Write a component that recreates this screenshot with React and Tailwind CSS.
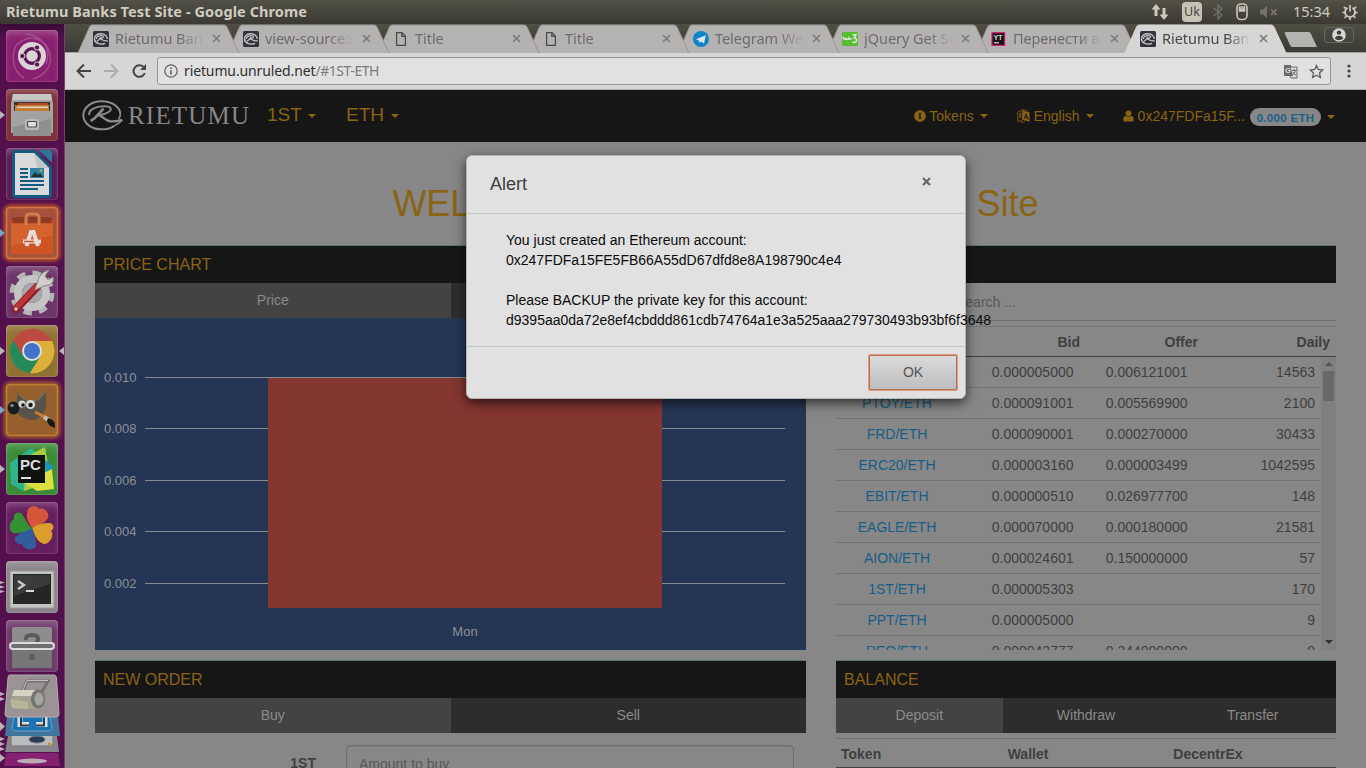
import React from "react";
import { FaInfoCircle } from "react-icons/fa";

const Caret = ({ className = "" }) => (
  <span className={`inline-block h-0 w-0 border-x-4 border-t-4 border-x-transparent border-t-[#8a6314] ${className}`} />
);

/* ---------- icons ---------- */

const Swirl = ({ className }) => (
  <svg className={className} viewBox="45 118 126 96" fill="none" stroke="#8b8b8b">
    <path d="M145 198C134 207 122 209 107 209C76 209 52 191 52 167C52 143 76 125 107 125C139 125 163 142 163 164" strokeWidth="6" />
    <path d="M163 164C163 170 161 174 158 178" strokeWidth="5" />
    <path d="M70 166C66 152 88 140 112 140C136 139 140 149 128 157C119 163 108 166 96 167" strokeWidth="6" />
    <path d="M113 147C100 156 96 172 74 184" strokeWidth="8" />
    <path d="M98 167C112 168 116 184 134 185C148 186 158 184 169 181" strokeWidth="7" />
    <path d="M169 181C162 190 154 194 144 199" strokeWidth="4" />
  </svg>
);

const SwirlFavicon = () => (
  <svg className="h-4 w-4 shrink-0" viewBox="0 0 16 16" fill="none" stroke="#c4c4c4">
    <rect width="16" height="16" rx="1.500" fill="#33333c" stroke="none" />
    <path d="M12 12.300C7 14.500 1.500 12 1.500 8C1.500 4 5 2.800 8 2.800C11.500 2.800 14.300 5 14.300 8" strokeWidth="1.400" />
    <path d="M3.500 8C3 5.500 6 4.600 8.500 4.600C11.500 4.600 11.500 6.800 7 7.800C9 8.200 9.500 10.500 14.800 9.800M8 6C6.500 8 5.500 9.500 3.800 10.300" strokeWidth="1.200" />
  </svg>
);

const FileFavicon = () => (
  <svg className="h-4 w-4 shrink-0" viewBox="0 0 16 16" fill="none" stroke="#4b4b4b" strokeWidth="1.300">
    <path d="M3.600 1.700H9L12.400 5.200V14.300H3.600Z" />
    <path d="M8.800 1.700V5.400H12.400" />
  </svg>
);

const TelegramFavicon = () => (
  <svg className="h-4 w-4 shrink-0" viewBox="0 0 16 16">
    <circle cx="8" cy="8" r="8" fill="#0d86c9" />
    <path d="M3 8.200L12.800 4.200L11 12.500L8 10.600L6.600 12L6 9.400Z" fill="#e2e6e8" />
  </svg>
);

const W3Favicon = () => (
  <svg className="h-4 w-4 shrink-0" viewBox="0 0 16 16" fill="none" stroke="#dfe5dc">
    <rect y="1" width="16" height="14" rx="1" fill="#55bd2d" stroke="none" />
    <path d="M1 5.500C1.200 9 3.500 9 4 7C4.500 9 6.500 9 7 7C7.500 8.300 8.500 8.500 10 7.500" strokeWidth="1.500" />
    <path d="M10.500 3.800H14L12 6.800C15.500 7 15 12 12 11.500C11.200 11.400 10.800 11 10.500 10.500" strokeWidth="1.500" />
  </svg>
);

const YouTrackFavicon = () => (
  <svg className="h-4 w-4 shrink-0" viewBox="0 0 16 16">
    <rect x="1" y="1.700" width="12.600" height="12.600" fill="#151515" stroke="#d2186c" strokeWidth="1.200" />
    <text x="2.800" y="8.600" fontFamily="Liberation Sans, sans-serif" fontWeight="bold" fontSize="6.800" fill="#dedede">YT</text>
    <rect x="3" y="11.200" width="5" height="1.200" fill="#dedede" />
  </svg>
);

const LanguageIcon = ({ className }) => (
  <svg className={className} viewBox="0 0 13 14" fill="none" stroke="#8a6314">
    <path d="M0.600 3L5.500 1.500V11L0.600 12.500Z" strokeWidth="1" opacity=".75" />
    <path d="M1.800 5L4.500 4.200M3 3.500V5C3 7 2.500 8.500 1.600 9.500M4.300 5C4 7 3 8 2 8.500M2.800 6.500L4.600 9" strokeWidth=".8" />
    <path d="M6 1.500L12.500 3.500V12.800L6 11Z" fill="#8a6314" stroke="none" />
    <path d="M7.400 9.500L9.200 4.800L11.200 10.600M8 8L10.400 8.700" stroke="#161616" strokeWidth="1" />
    <path d="M4 1L7 0.500L11 2M3 12.500L6 13.500L8 12.800" strokeWidth=".9" opacity=".75" />
  </svg>
);

const UserIcon = ({ className }) => (
  <svg className={className} viewBox="0 0 12 13" fill="#8a6314">
    <circle cx="6" cy="3.600" r="3.200" />
    <path d="M0.300 10.500C0.300 8 1.300 6.300 3 6.100Q6 8.600 9 6.100C10.700 6.300 11.700 8 11.700 10.500Q11.700 12.500 9.800 12.500H2.200Q0.300 12.500 0.300 10.500Z" />
  </svg>
);

/* ---------- system bar ---------- */

const SystemBar = () => (
  <header className="flex h-6 shrink-0 items-center justify-between bg-linear-to-b from-[#525146] to-[#3a3934] pl-1.5 pr-2 font-['Noto_Sans',sans-serif] text-[#d0ccc0]">
    <span className="-mt-0.5 whitespace-nowrap text-[14.500px] font-bold leading-6 tracking-[0.090px]">Rietumu Banks Test Site - Google Chrome</span>
    <div className="flex h-6 items-center">
      <svg className="mr-[13px] h-[18px] w-[18px]" viewBox="0 0 18 18" fill="#cbc7bb">
        <path d="M5 1L9.500 6.500H6.500V13H3.500V6.500H0.500Z" />
        <path d="M13 17L17.500 11.500H14.500V5H11.500V11.500H8.500Z" />
      </svg>
      <span className="mr-2.5 flex h-5 w-5 items-center justify-center rounded-sm bg-[#c6c3b7] text-[12.500px] leading-none text-[#45433c]">Uk</span>
      <svg className="mr-3 h-[18px] w-3" viewBox="0 0 12 18" fill="none" stroke="#74736b" strokeWidth="1.300">
        <path d="M1.500 5L10 12L6 16V2L10 6L1.500 13" />
      </svg>
      <svg className="mr-3 h-[18px] w-3" viewBox="0 0 12 18" fill="none" stroke="#cbc7bb">
        <rect x="1" y="1" width="10" height="15.500" rx="4" strokeWidth="1.600" />
        <path d="M3 3.500V8.500H9V3.500H7.500V6H6.600V3.500H5.400V6H4.500V3.500Z" fill="#cbc7bb" strokeWidth=".5" />
      </svg>
      <svg className="mr-[15px] h-[14px] w-[18px]" viewBox="0 0 18 14" fill="#74736b" stroke="#74736b">
        <path d="M0 4.500H3L7 1V13L3 9.500H0Z" stroke="none" />
        <path d="M11 4.500L16.500 10M16.500 4.500L11 10" strokeWidth="1.800" />
      </svg>
      <span className="mr-3 -mt-0.5 text-[14.500px] leading-6">15:34</span>
      <svg className="h-4 w-4" viewBox="0 0 16 16" fill="none" stroke="#cbc7bb">
        <path d="M5.600 3.700A5 5 0 1 0 10.400 3.700" strokeWidth="1.800" />
        <path d="M8 1V7.500M1.800 3L4 4.500M14.200 3L12 4.500M0.300 8.500H3M15.700 8.500H13M2.500 14L4.500 12M13.500 14L11.500 12M8 13.500V16" strokeWidth="1.700" />
      </svg>
    </div>
  </header>
);

/* ---------- launcher ---------- */

const Tile = ({ tone, children, marks = 0, focused, glow = "shadow-[inset_0_0_1px_1px_rgba(255,255,255,.12),inset_0_6px_10px_-4px_rgba(255,255,255,.3)]", markTone = "fill-[#b9b3b8]" }) => (
  <li className="relative mb-[7px] h-[52px] w-[52px] shrink-0">
    <div className={`h-[52px] w-[52px] overflow-hidden rounded-[4px] ${glow} ${tone}`}>
      <svg className="h-[52px] w-[52px]" viewBox="0 0 52 52">{children}</svg>
    </div>
    {marks === 1 && (
      <svg className="absolute top-[21px] -left-1.5 h-[10px] w-[5px]" viewBox="0 0 5 10"><path d="M0 1L5 5L0 9Z" className={markTone} /></svg>
    )}
    {marks === 3 && (
      <svg className="absolute top-[20px] -left-1.5 h-[12px] w-[5px]" viewBox="0 0 5 12" fill="#b9b3b8"><path d="M0 0L5 1.500L0 3ZM0 4.500L5 6L0 7.500ZM0 9L5 10.500L0 12Z" /></svg>
    )}
    {focused && (
      <svg className="absolute top-[21px] left-[53px] h-[10px] w-[5px]" viewBox="0 0 5 10"><path d="M5 1L0 5L5 9Z" fill="#b9b3b8" /></svg>
    )}
  </li>
);

const Launcher = () => (
  <nav className="h-full w-[65px] shrink-0 overflow-hidden border-r border-[#73426f] bg-linear-to-b from-[#3b0b38] via-[#540f4d] via-2% to-[#540f4d] pl-1.5 pt-1.5">
    <ul className="flex flex-col">
      <Tile tone="bg-[#89206f]">
        <g fill="none" stroke="#b069a3" strokeWidth="1.500" opacity=".6">
          <path d="M9 17C5 30 8 42 18 48M9 17C22 2 42 8 44 25M44 25C47 38 36 46 27 49M20 4C36 6 46 18 40 34" />
        </g>
        <circle cx="26" cy="26" r="14" fill="#d9d4d8" />
        <circle cx="26" cy="26" r="7.400" fill="none" stroke="#5c1450" strokeWidth="3.200" />
        <g fill="#5c1450" stroke="#d9d4d8" strokeWidth="1">
          <circle cx="16.300" cy="26" r="2.600" /><circle cx="31" cy="17.500" r="2.600" /><circle cx="31" cy="34.500" r="2.600" />
        </g>
      </Tile>
      <Tile tone="bg-[#7c3038]" marks={1}>
        <path d="M7 5H45L47 14V44H5V14Z" fill="#a4a4a2" />
        <path d="M7 5H45L46 11H6Z" fill="#c6c6c4" />
        <rect x="8" y="13" width="36" height="12" fill="#3c3330" />
        <rect x="12" y="14" width="30" height="3" fill="#b4492a" />
        <path d="M9 16H43V25H9Z" fill="#c67b32" />
        <path d="M11 17.500H42V19H11Z" fill="#e1d5bf" />
        <path d="M7 22H45V47H7Z" fill="#8f8f8f" />
        <path d="M7 22H45V30L7 38Z" fill="#a2a2a1" />
        <rect x="19" y="30" width="14" height="11" rx="2" fill="#b9b9b8" />
        <rect x="21.500" y="32.500" width="9" height="5.500" rx="1" fill="#dedede" stroke="#4b4b4b" strokeWidth="1.200" />
      </Tile>
      <Tile tone="bg-[#571d54]">
        <path d="M8 2H29L46 19V47Q46 50 43 50H9Q6 50 6 47V4Z" fill="#165980" />
        <path d="M33 2H43Q46 2 46 5V15Z" fill="#2b77a0" />
        <path d="M9 5H28L43 20V47H9Z" fill="#d8d9da" />
        <path d="M28 5L43 20H31Z" fill="#bfc5c9" />
        <path d="M14 21H22M14 25H22M14 29H22M14 33H38M14 37H38M14 41H32" stroke="#165980" strokeWidth="2" />
        <rect x="24" y="20" width="14" height="10" fill="#2b82aa" />
        <path d="M25 29L29 24L32 27L34 25L37 29Z" fill="#25322c" /><circle cx="35" cy="22.500" r="1.500" fill="#b5a043" />
      </Tile>
      <Tile tone="bg-[#a5523a]" glow="shadow-[inset_0_0_2px_1px_#e78342,0_0_4px_2px_#c8602f]" marks={1} markTone="fill-[#73a8c4]">
        <path d="M5 12H47V47H5Z" fill="#cd5425" />
        <path d="M5 12L10 10H42L47 12L45 16H7Z" fill="#8e3c25" />
        <path d="M5 17H47V28L5 39Z" fill="#d86a35" opacity=".7" />
        <path d="M20 18V11Q20 7 24 7H29Q33 7 33 11V18" fill="none" stroke="#d57a51" strokeWidth="3" />
        <path d="M20.500 39L25 25H27.500L32 39" fill="none" stroke="#e6ddd8" strokeWidth="4" />
        <path d="M17 34.500H35" stroke="#e6ddd8" strokeWidth="4" /><path d="M18 34.500H28" stroke="#cd5425" strokeWidth="1.700" />
      </Tile>
      <Tile tone="bg-[#6c3469]">
        <circle cx="26" cy="27" r="19" fill="none" stroke="#b5b4b5" strokeWidth="7" strokeDasharray="8 6.900" />
        <circle cx="26" cy="27" r="14" fill="none" stroke="#c5c4c5" strokeWidth="8" />
        <circle cx="26" cy="27" r="10" fill="#a9a7aa" />
        <path d="M10 43L31 21" stroke="#8f1d22" strokeWidth="8" strokeLinecap="round" />
        <path d="M10 42L30 21" stroke="#b8373a" strokeWidth="5" strokeLinecap="round" />
        <path d="M29 24L33 11Q37 5 43 4L39 10L42 14L47 11Q49 19 38 20Z" fill="#d1cecb" stroke="#8d8887" />
        <circle cx="10" cy="43" r="1.600" fill="#dedede" />
      </Tile>
      <Tile tone="bg-[#8f7134]" marks={1} focused>
        <circle cx="26" cy="26" r="22" fill="#c3a02f" />
        <path d="M26 26L7 15A22 22 0 0 0 24 48L34 32Z" fill="#238a58" />
        <path d="M7 15L17 31L26 16H46A22 22 0 0 0 7 15Z" fill="#bb4a40" />
        <path d="M26 16H46A22 22 0 0 1 24 48L35 31Z" fill="#ddb039" />
        <circle cx="26" cy="26" r="10" fill="#e0e0dd" /><circle cx="26" cy="26" r="8" fill="#4174c8" />
      </Tile>
      <Tile tone="bg-[#96602c]" glow="shadow-[inset_0_0_2px_1px_#d18b37,0_0_4px_2px_#b06a2c]" marks={1} markTone="fill-[#73a8c4]">
        <path d="M12 8Q18 18 27 17Q35 16 39 6Q43 25 35 32Q27 40 15 32Q8 28 12 8Z" fill="#57524b" />
        <path d="M12 9Q18 18 27 17Q35 16 39 7" fill="none" stroke="#7d766b" />
        <ellipse cx="7.500" cy="24" rx="6" ry="6.500" fill="#171c20" /><ellipse cx="6" cy="21.500" rx="2" ry="1.600" fill="#77848b" />
        <circle cx="16" cy="20" r="3.600" fill="#d8d8d2" /><circle cx="24.500" cy="20.500" r="4.600" fill="#d8d8d2" />
        <circle cx="17" cy="21" r="1.800" fill="#191919" /><circle cx="24.500" cy="21" r="2.200" fill="#191919" />
        <path d="M29 28L41 34" stroke="#ce7c2f" strokeWidth="3" /><path d="M38 33L43 36" stroke="#bdc0bd" strokeWidth="4" />
        <path d="M42 34Q50 36 49 44Q42 42 41 37Z" fill="#171717" />
      </Tile>
      <Tile tone="bg-[#3c8b39]" marks={1}>
        <path d="M4 20L25 5L38 17L25 45L17 48L5 41Z" fill="#30b28d" />
        <path d="M20 14L39 4L45 39L18 48Z" fill="#a6cc3f" />
        <path d="M38 16L48 24L40 31Z" fill="#1796b6" />
        <path d="M18 40L46 26L48 46L31 48Z" fill="#dce043" />
        <rect x="12" y="12" width="27" height="28" fill="#10120f" />
        <text x="14" y="27" fontFamily="Liberation Sans, sans-serif" fontWeight="bold" fontSize="15" fill="#dedede">PC</text>
        <rect x="15" y="34" width="10" height="2" fill="#dedede" />
      </Tile>
      <Tile tone="bg-[#651e5e]">
        <path d="M26 26C20 17 20 13 22 7C26 2 32 4 33 7C38 5 44 11 42 16C38 22 33 23 26 26Z" fill="#d4553a" />
        <path d="M26 26C30 23 36 21 44 21C49 23 48 27 45 29C49 33 44 42 38 42C31 40 28 32 26 26Z" fill="#d99e2c" />
        <path d="M26 26C19 26 15 31 9 35C8 40 12 43 16 42C19 49 28 49 30 44C30 37 28 31 26 26Z" fill="#315d9c" />
        <path d="M26 26C21 23 20 17 15 11C10 9 7 13 8 17C2 20 3 29 7 31C14 32 20 29 26 26Z" fill="#339334" />
      </Tile>
      <Tile tone="bg-[#8b828a]" marks={3}>
        <rect x="4" y="10" width="44" height="37" fill="#c3c4c1" stroke="#999b98" />
        <rect x="7" y="13" width="38" height="30" fill="#232625" />
        <path d="M8 14H44V23L8 35Z" fill="#393c3b" />
        <path d="M12 20L18 24L12 28" fill="none" stroke="#c9cbc8" strokeWidth="2.300" /><path d="M20 30H28" stroke="#d9dad8" strokeWidth="2" />
      </Tile>
      <Tile tone="bg-[#6f3a6b]">
        <rect x="6" y="7" width="40" height="41" rx="2" fill="#8e8d8e" />
        <path d="M6 26H46V46Q46 48 44 48H8Q6 48 6 46Z" fill="#777677" />
        <path d="M20 20Q19 15 26 15Q33 15 32 20L30 24" fill="none" stroke="#59585a" strokeWidth="4" />
        <circle cx="26" cy="37" r="3" fill="#5d5c5e" />
        <rect x="4" y="23" width="44" height="6" rx="3" fill="#706f70" stroke="#dedbdd" strokeWidth="2" />
      </Tile>
    </ul>
    <svg className="-mt-[5px] -ml-1.5 h-[96px] w-[64px]" viewBox="0 0 64 96">
      <path d="M6 79H58L60 92H4Z" fill="#842171" /><ellipse cx="32" cy="87" rx="15" ry="2.500" fill="#b9aab6" />
      <path d="M8 62H57L59 78H5Z" fill="#87848a" /><rect x="11" y="58" width="42" height="14" rx="2" fill="#b9bbbd" stroke="#767675" />
      <ellipse cx="37" cy="65.500" rx="8" ry="3.500" fill="#283c53" stroke="#777d84" /><rect x="48" y="69" width="3" height="2" fill="#d08b22" />
      <path d="M7 41H58L60 62H5Z" fill="#41759d" /><path d="M14 41H50L52 55Q51 57 48 57H16Q13 57 12 55Z" fill="#1a74b6" stroke="#76a4c4" />
      <path d="M20 42V50.500H29M45 42V50.500H36" fill="none" stroke="#d9dedf" strokeWidth="5" /><path d="M21 41V51.500H29M44 41V51.500H36" fill="none" stroke="#2d3a44" strokeWidth="2" />
      <path d="M10 1H54Q56 1 56.500 4L59 40Q59 43 56 43H8Q5 43 5 40L8 4Q8 1 10 1Z" fill="#9a9295" stroke="#b4adb0" />
      <path d="M23 17L27 7H48L39 23" fill="none" stroke="#72716d" strokeWidth="3" /><path d="M23 16L27 6.500H48" fill="none" stroke="#c0c0bb" />
      <path d="M14 16H38V35H14Q8 26 14 16Z" fill="#a1a290" /><path d="M14 16H38V22H12Z" fill="#d4d3c4" /><path d="M10 25L28 28V35L12 34Z" fill="#b6b597" />
      <ellipse cx="38" cy="25" rx="7" ry="9.500" fill="#71736f" /><ellipse cx="39" cy="25" rx="4.500" ry="6.500" fill="#a3a4a0" />
      <g fill="#b9b3b8"><path d="M0 18L5 20L0 22ZM0 23L5 25L0 27ZM0 48L5 52.500L0 57ZM0 63L5 65L0 67ZM0 68L5 70L0 72ZM0 73L5 75L0 77ZM0 80L5 84L0 88Z" /></g>
    </svg>
  </nav>
);

/* ---------- browser chrome ---------- */

const tabs = [
  { icon: <SwirlFavicon />, title: "Rietumu Banks", z: "z-[8] w-[150px]" },
  { icon: <SwirlFavicon />, title: "view-source:l", z: "z-[7] w-[150px]" },
  { icon: <FileFavicon />, title: "Title", z: "z-[6] w-[150px]" },
  { icon: <FileFavicon />, title: "Title", z: "z-[5] w-[150px]" },
  { icon: <TelegramFavicon />, title: "Telegram Web", z: "z-[4] w-[149px]" },
  { icon: <W3Favicon />, title: "jQuery Get Sta", z: "z-[3] w-[149px]" },
  { icon: <YouTrackFavicon />, title: "Перенести все", z: "z-[2] w-[149px]" },
  { icon: <SwirlFavicon />, title: "Rietumu Bank", z: "z-[9] w-[149px]", active: true },
];

const Tab = ({ icon, title, active, z }) => (
  <div className={`relative h-[29px] shrink-0 ${z}`}>
    <svg className="absolute inset-0 h-[29px] w-[162px]" viewBox="0 0 162 29">
      <path d="M0 29L11.500 3Q12.500 1 14 1H146Q148 1 149 3L161 29Z" fill={active ? "#d8d6d4" : "#b5b3b1"} />
      <path d="M0 29L11.500 3Q12.500 1 14 1H146Q148 1 149 3L161 29" fill="none" stroke={active ? "#d8d6d4" : "#9a9896"} strokeWidth="1" />
    </svg>
    <div className="relative flex h-[29px] items-center pl-[15px] font-['Noto_Sans',sans-serif]">
      {icon}
      <span className={`ml-1.5 w-[89px] overflow-hidden whitespace-nowrap text-[14.500px] leading-[29px] tracking-[-0.050px] [mask-image:linear-gradient(to_right,black_72%,transparent)] ${active ? "text-[#484848]" : "text-[#6d6b6b]"}`}>
        {title}
      </span>
      <svg className="ml-[8px] h-[9px] w-[9px]" viewBox="0 0 9 9" stroke="#7b7979" strokeWidth="1.600"><path d="M1 1L8 8M8 1L1 8" /></svg>
    </div>
  </div>
);

const BrowserChrome = () => (
  <div className="shrink-0">
    <div className="flex h-[28px] bg-linear-to-b from-[#504f44] to-[#3b3a35] pl-[13px]">
      {tabs.map((t, i) => <Tab key={i} {...t} />)}
      <svg className="ml-[10px] mt-2 h-[16px] w-[34px] shrink-0" viewBox="0 0 34 16"><path d="M2 0H25Q26 0 27 2L33 15H9Q7 15 6.500 14L1 2Q0 0 2 0Z" fill="#b5b3b1" /></svg>
      <div className="ml-[6px] mt-[3px] flex h-[16px] w-[30px] shrink-0 items-center justify-center rounded-sm border border-[#68675f]">
        <svg className="h-[14px] w-[14px]" viewBox="0 0 14 14"><circle cx="7" cy="7" r="6.800" fill="#d8d6d4" /><circle cx="7" cy="4.600" r="2.200" fill="#403f39" /><path d="M2.600 10.200Q4 7.800 7 7.800T11.400 10.200Q9.500 12.300 7 12.300T2.600 10.200Z" fill="#403f39" /></svg>
      </div>
    </div>
    <div className="flex h-[38px] items-center border-t border-b border-t-[#a3a19f] border-b-[#b4b2b0] bg-[#d8d6d4] pl-[11px]">
      <svg className="h-4 w-[15px]" viewBox="0 0 15 16" fill="none" stroke="#454545" strokeWidth="2"><path d="M15 8H2M8 1.500L1.500 8L8 14.500" /></svg>
      <svg className="ml-[13px] h-4 w-[15px]" viewBox="0 0 15 16" fill="none" stroke="#aeacaa" strokeWidth="2"><path d="M0 8H13M7 1.500L13.500 8L7 14.500" /></svg>
      <svg className="ml-[13px] h-4 w-4" viewBox="0 0 16 16" fill="none" stroke="#454545" strokeWidth="2"><path d="M12.800 10A5.800 5.800 0 1 1 11.500 4" /><path d="M14 1V7H8Z" fill="#454545" stroke="none" /></svg>
      <div className="ml-[9px] flex h-[28px] w-[1174px] items-center rounded-[3px] border border-[#999796] bg-[#e1e1e1] pl-1.5 pr-[6px] font-['Noto_Sans',sans-serif] text-[14px]">
        <svg className="h-[14px] w-[14px]" viewBox="0 0 14 14" fill="none" stroke="#656565" strokeWidth="1.300"><circle cx="7" cy="7" r="6.200" /><path d="M7 6.200V10.500M7 3.500V5" strokeWidth="1.700" /></svg>
        <span className="-mt-0.5 ml-1.5 whitespace-nowrap tracking-[-0.120px] text-[#303030]">rietumu.unruled.net<span className="tracking-[-0.450px] text-[#7a7a7a]">/#1ST-ETH</span></span>
        <svg className="ml-auto h-[15px] w-[15px]" viewBox="0 0 15 15">
          <path d="M1 1H8L10 12H1Z" fill="#6a6a6a" /><path d="M7 3H14V14H8L6.800 11.500H9.500Z" fill="#dadada" stroke="#6a6a6a" />
          <text x="2" y="9" fontSize="7.500" fontFamily="Liberation Sans, sans-serif" fontWeight="bold" fill="#dadada">G</text><path d="M9 6.500H13.500M11.200 5V6.500M12.500 6.500Q12 9.500 9.500 11M10 8Q11 10 13 11" fill="none" stroke="#6a6a6a" strokeWidth=".9" />
        </svg>
        <svg className="ml-[11px] h-[15px] w-[15px]" viewBox="0 0 15 15" fill="none" stroke="#5d5d5d" strokeWidth="1.300"><path d="M7.500 1.500L9.300 5.500L13.800 6L10.500 9L11.400 13.500L7.500 11.200L3.600 13.500L4.500 9L1.200 6L5.700 5.500Z" /></svg>
      </div>
      <svg className="ml-[16px] h-[14px] w-1" viewBox="0 0 4 14" fill="#424242"><circle cx="2" cy="2" r="1.600" /><circle cx="2" cy="7" r="1.600" /><circle cx="2" cy="12" r="1.600" /></svg>
    </div>
  </div>
);

/* ---------- site ---------- */

const Navbar = () => (
  <div className="flex h-[52px] shrink-0 items-center bg-[#161616] text-[#8a6314]">
    <Swirl className="-mt-[2px] ml-4 h-8 w-[42px]" />
    <span className="-mt-[2px] ml-[5px] w-[121px] whitespace-nowrap font-['Liberation_Serif',serif] text-[25px] leading-none tracking-[1.200px] text-[#878787]">RIETUMU</span>
    <span className="-mt-0.5 ml-[18px] w-[79px] whitespace-nowrap text-[19px]">1ST<Caret className="mb-[3px] ml-[6px]" /></span>
    <span className="-mt-0.5 whitespace-nowrap text-[19px]">ETH<Caret className="mb-[3px] ml-[7px]" /></span>
    <div className="ml-auto mr-[31px] flex items-center text-[14px]">
      <FaInfoCircle className="mr-[3px] h-3 w-3" />Tokens<Caret className="mr-[29px] ml-1.5" />
      <LanguageIcon className="mr-1 h-[14px] w-[13px]" />English<Caret className="mr-[29px] ml-1.5" />
      <UserIcon className="mr-1 h-[12px] w-[11px]" />0x247FDFa15F...
      <span className="mt-0.5 ml-[5px] flex h-[18px] w-[71px] items-center justify-center rounded-full bg-[#878787] text-[11.500px] leading-[18px] font-bold tracking-[.3px] text-[#1b608a]"><span className="mt-px">0.000 ETH</span></span>
      <Caret className="mt-px ml-1.5" />
    </div>
  </div>
);

const PanelTitle = ({ children }) => (
  <h2 className="h-[38px] border-t border-[#5b756d] bg-[#161616] pl-2 text-[16px] leading-[37px] text-[#8a6314]">{children}</h2>
);

const PanelTabs = ({ items }) => (
  <div className="flex h-[35px] text-center text-[14px] leading-[35px] text-[#8a8a8a]">
    {items.map((t, i) => <span key={i} className={`flex-1 ${i === 0 ? "bg-[#434343]" : "bg-[#2d2d2d]"}`}>{t}</span>)}
  </div>
);

const ticks = [[60, "0.010"], [111, "0.008"], [163, "0.006"], [214, "0.004"], [266, "0.002"]];

const PriceChart = () => (
  <svg className="h-[332px] w-[711px] bg-[#253654]" viewBox="0 0 711 332" fontFamily="Liberation Sans, sans-serif" fontSize="13" fill="#8c8f95">
    {ticks.map(([y, label]) => (
      <g key={label}>
        <rect x="50" y={y - 1} width="640" height="1" fill="#878a8e" />
        <text x="41.500" y={y + 4} textAnchor="end">{label}</text>
      </g>
    ))}
    <rect x="173" y="60" width="394" height="230" fill="#843631" />
    <text x="370" y="318" textAnchor="middle">Mon</text>
  </svg>
);

const orders = [
  ["", "0.000005000", "0.006121001", "14563"],
  ["PTOY/ETH", "0.000091001", "0.005569900", "2100"],
  ["FRD/ETH", "0.000090001", "0.000270000", "30433"],
  ["ERC20/ETH", "0.000003160", "0.000003499", "1042595"],
  ["EBIT/ETH", "0.000000510", "0.026977700", "148"],
  ["EAGLE/ETH", "0.000070000", "0.000180000", "21581"],
  ["AION/ETH", "0.000024601", "0.150000000", "57"],
  ["1ST/ETH", "0.000005303", "", "170"],
  ["PPT/ETH", "0.000005000", "", "9"],
  ["REQ/ETH", "0.000042777", "0.344000000", "0"],
];

const Market = () => (
  <div className="flex h-[367px] flex-col text-[14px] text-[#3f3f3f]">
    <div className="h-[38px] border-b border-[#6b6b6b] pl-[120px] leading-[38px] text-[#575757]">Search ...</div>
    <div className="mt-[5px] flex h-[31px] border-t border-b-[1.500px] border-t-[#737373] border-b-[#404040] pr-1.5 text-right font-bold leading-[31px]">
      <span className="w-[244px]">Bid</span>
      <span className="w-[118px]">Offer</span>
      <span className="flex-1">Daily</span>
    </div>
    <div className="flex min-h-0 flex-1">
      <div className="w-[484px] overflow-hidden">
        {orders.map(([name, bid, offer, daily]) => (
          <div key={name} className="flex h-[31px] border-b border-[#737373] pr-[5px] text-right leading-[31px]">
            <span className="w-[122px] text-center text-[#175e87]">{name}</span>
            <span className="w-[115.500px]">{bid}</span>
            <span className="w-[114px]">{offer}</span>
            <span className="flex-1">{daily}</span>
          </div>
        ))}
      </div>
      <div className="ml-px flex w-[15px] flex-col items-center bg-[#808080]">
        <span className="mt-[5px] h-0 w-0 border-x-4 border-b-4 border-x-transparent border-b-[#555]" />
        <span className="mt-[5px] h-[30px] w-[11px] bg-[#686868]" />
        <span className="mt-auto mb-1.5 h-0 w-0 border-x-4 border-t-4 border-x-transparent border-t-[#303030]" />
      </div>
    </div>
  </div>
);

const NewOrder = () => (
  <div className="flex pt-3 text-[14px]">
    <label className="w-[221px] text-right font-bold leading-9 text-[#3f3f3f]">1ST</label>
    <div className="ml-[30px] h-9 w-[448px] rounded-[4px] border border-[#6c6c6c] pl-3 leading-9 text-[#585858] shadow-[inset_0_1px_1px_rgba(0,0,0,.07)]">Amount to buy</div>
  </div>
);

const Balance = () => (
  <div className="mt-[5px] grid h-[31px] grid-cols-3 border-t border-b-2 border-t-[#737373] border-b-[#404040] text-[14px] font-bold leading-[30px] text-[#3f3f3f]">
    <span className="pl-[5px]">Token</span>
    <span className="pl-[5px]">Wallet</span>
    <span className="pl-1">DecentrEx</span>
  </div>
);

const AlertDialog = () => (
  <div className="absolute top-[65px] left-[401px] flex h-[244px] w-[500px] flex-col rounded-[6px] border border-[#b4b6b6] bg-[#e1e1e1] text-[14px] shadow-[0_4px_12px_rgba(0,0,0,.65)]">
    <div className="flex h-[58px] shrink-0 justify-between border-b border-[#c5c6c6] pr-[34px] pl-[23px]">
      <span className="pt-[15px] text-[18px] leading-[26px] text-[#3d3d3d]">Alert</span>
      <svg className="mt-[21px] h-[9px] w-[9px]" viewBox="0 0 9 9" stroke="#666" strokeWidth="2.200"><path d="M1 1L8 8M8 1L1 8" /></svg>
    </div>
    <p className="h-[133px] shrink-0 whitespace-pre border-b border-[#c5c6c6] pt-4 pl-[39px] leading-5 text-[#0b0b0b]">
      {"You just created an Ethereum account:\n0x247FDFa15FE5FB66A55dD67dfd8e8A198790c4e4\n\nPlease BACKUP the private key for this account:\nd9395aa0da72e8ef4cbddd861cdb74764a1e3a525aaa279730493b93bf6f3648"}
    </p>
    <button className="mt-[8px] mr-2 h-[35px] w-[88px] shrink-0 self-end rounded-[1px] border border-[#b56f55] bg-linear-to-b from-[#dadada] to-[#bebebe] text-[#555] shadow-[0_0_0_1px_#dd9a7e]">OK</button>
  </div>
);

export default function App() {
  return (
    <div className="flex h-[768px] w-[1366px] flex-col overflow-hidden bg-[#878787] font-['Liberation_Sans',Arial,sans-serif]">
      <SystemBar />
      <div className="flex min-h-0 flex-1">
        <Launcher />
        <div className="flex min-w-0 flex-1 flex-col">
          <BrowserChrome />
          <main className="relative flex min-h-0 flex-1 flex-col">
            <Navbar />
            <h1 className="h-[103px] shrink-0 pt-9 text-center text-[36px] leading-[52px] text-[#8a6314]">WELCOME TO Rietumu Banks Test Site</h1>
            <div className="flex gap-[30px] pl-[30px]">
              <div className="w-[711px] shrink-0">
                <PanelTitle>PRICE CHART</PanelTitle>
                <PanelTabs items={["Price", ""]} />
                <PriceChart />
                <div className="mt-2.5">
                  <PanelTitle>NEW ORDER</PanelTitle>
                  <PanelTabs items={["Buy", "Sell"]} />
                  <NewOrder />
                </div>
              </div>
              <div className="w-[500px] shrink-0">
                <PanelTitle />
                <Market />
                <div className="mt-2.5">
                  <PanelTitle>BALANCE</PanelTitle>
                  <PanelTabs items={["Deposit", "Withdraw", "Transfer"]} />
                  <Balance />
                </div>
              </div>
            </div>
            <AlertDialog />
          </main>
        </div>
      </div>
    </div>
  );
}
